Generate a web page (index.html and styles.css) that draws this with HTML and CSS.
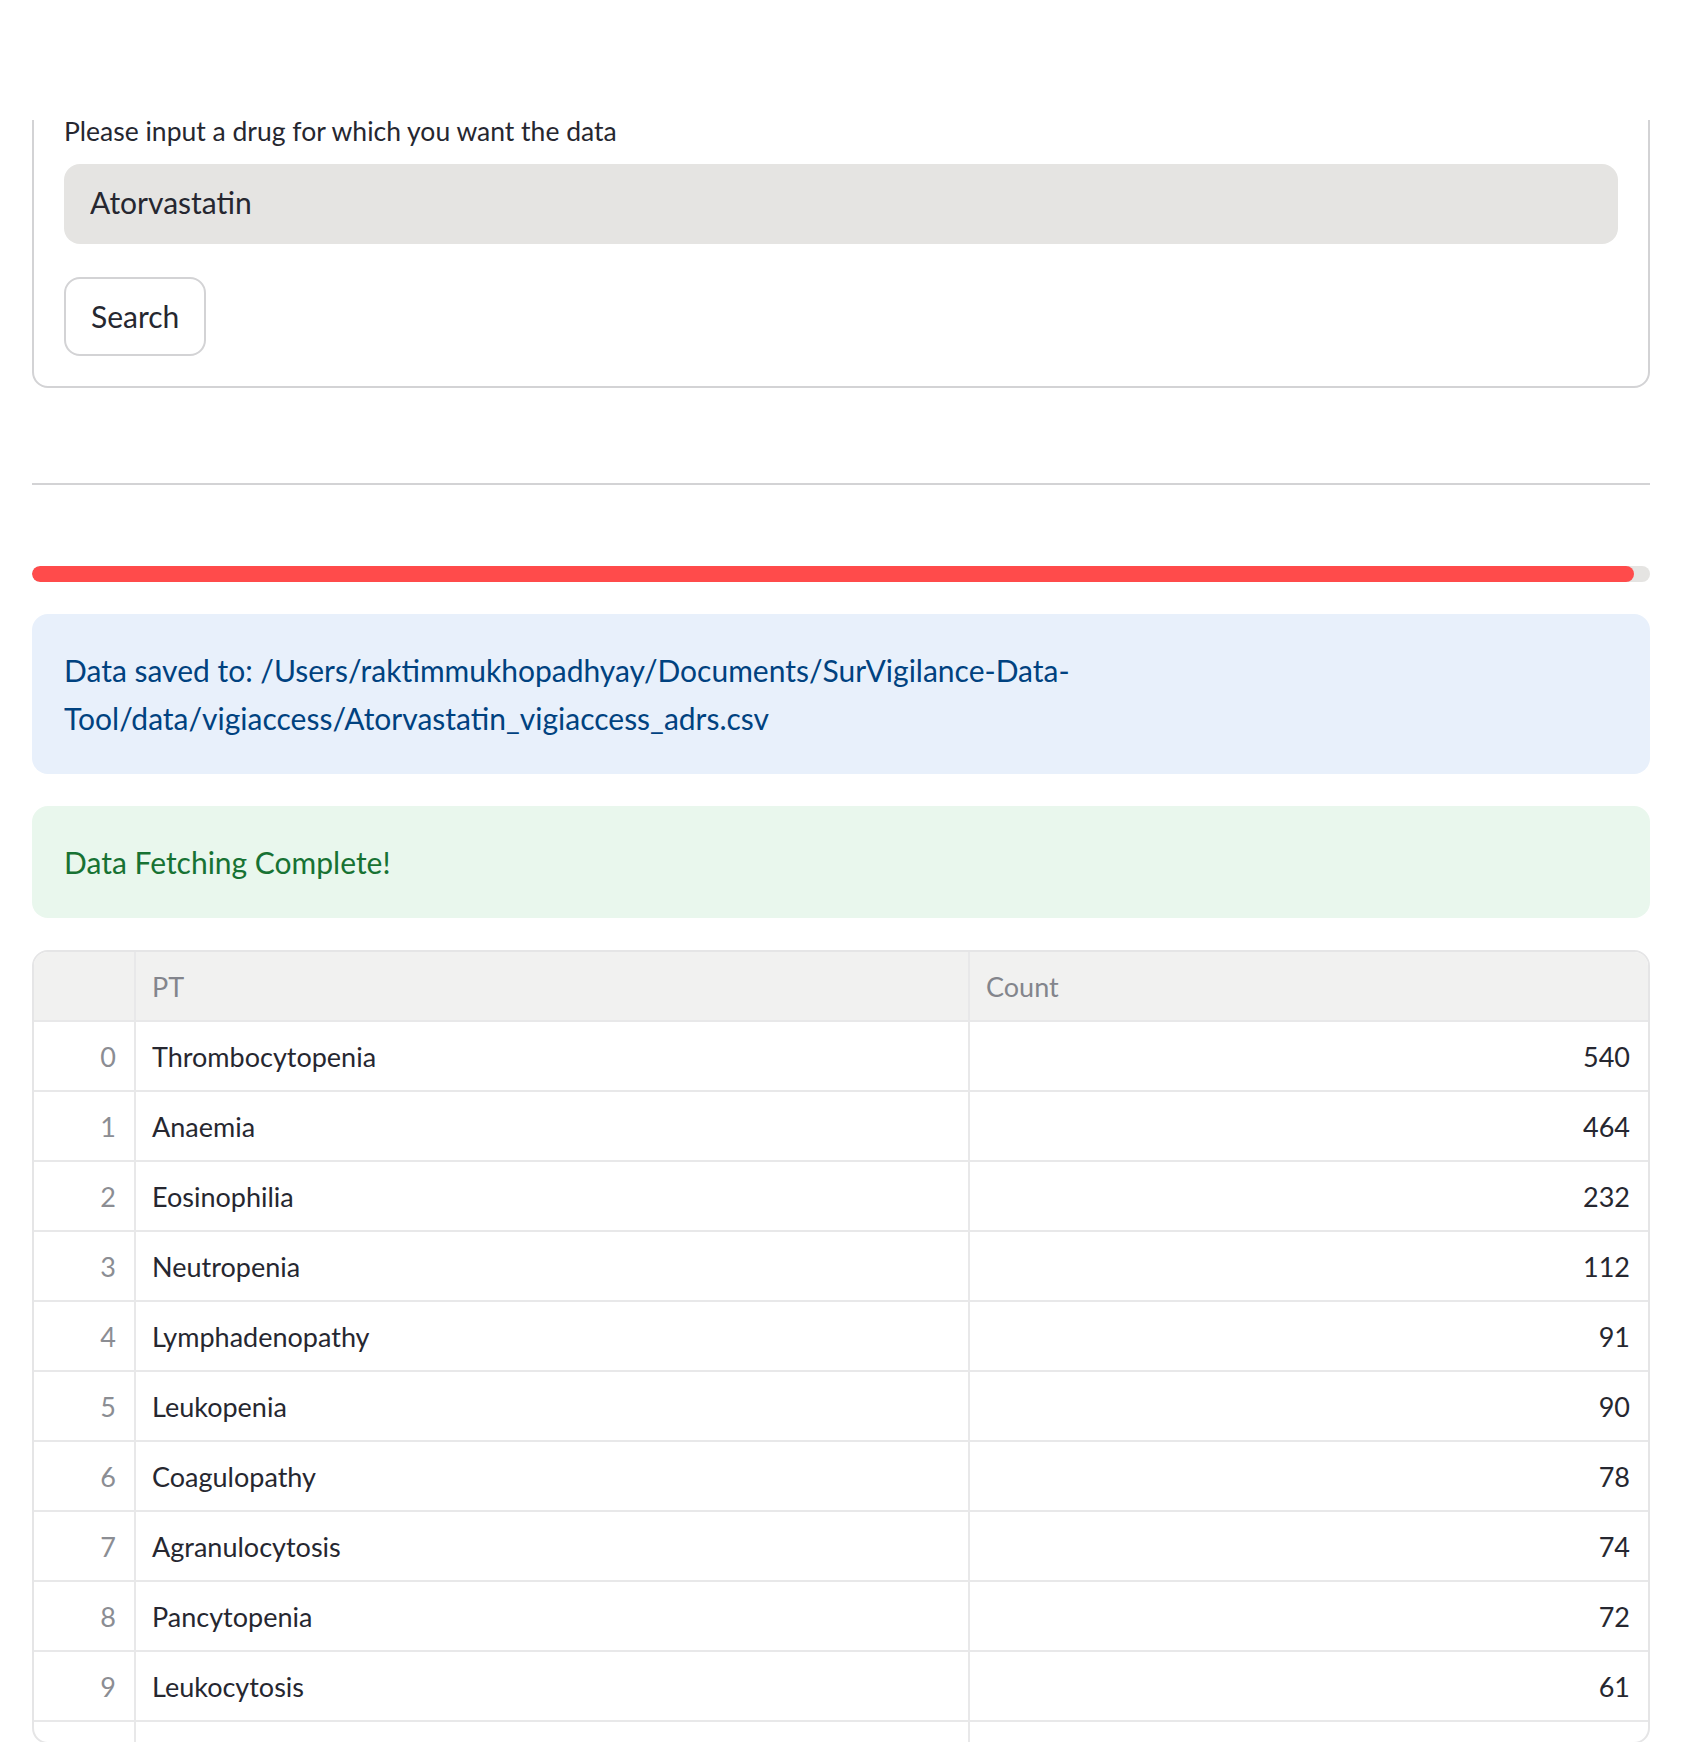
FILE: index.html
```html
<!DOCTYPE html>
<html lang="en">
<head>
<meta charset="utf-8">
<title>SurVigilance Data Tool – VigiAccess</title>
<link rel="stylesheet" href="styles.css">
</head>
<body>
<header class="app-header"></header>
<main class="main">
  <form class="query-form">
    <label class="field-label" for="drug">Please input a drug for which you want the data</label>
    <input id="drug" class="text-input" type="text" value="Atorvastatin">
    <button type="button" class="btn">Search</button>
  </form>

  <hr class="divider">

  <div class="progress"><div class="progress-fill" style="width:99%"></div></div>

  <div class="alert alert-info">Data saved to: /Users/raktimmukhopadhyay/Documents/SurVigilance-Data-<br>Tool/data/vigiaccess/Atorvastatin_vigiaccess_adrs.csv</div>

  <div class="alert alert-success">Data Fetching Complete!</div>

  <div class="grid">
    <div class="row head">
      <div class="cell idx"></div>
      <div class="cell">PT</div>
      <div class="cell last">Count</div>
    </div>
    <div class="row"><div class="cell idx">0</div><div class="cell">Thrombocytopenia</div><div class="cell num last">540</div></div>
    <div class="row"><div class="cell idx">1</div><div class="cell">Anaemia</div><div class="cell num last">464</div></div>
    <div class="row"><div class="cell idx">2</div><div class="cell">Eosinophilia</div><div class="cell num last">232</div></div>
    <div class="row"><div class="cell idx">3</div><div class="cell">Neutropenia</div><div class="cell num last">112</div></div>
    <div class="row"><div class="cell idx">4</div><div class="cell">Lymphadenopathy</div><div class="cell num last">91</div></div>
    <div class="row"><div class="cell idx">5</div><div class="cell">Leukopenia</div><div class="cell num last">90</div></div>
    <div class="row"><div class="cell idx">6</div><div class="cell">Coagulopathy</div><div class="cell num last">78</div></div>
    <div class="row"><div class="cell idx">7</div><div class="cell">Agranulocytosis</div><div class="cell num last">74</div></div>
    <div class="row"><div class="cell idx">8</div><div class="cell">Pancytopenia</div><div class="cell num last">72</div></div>
    <div class="row"><div class="cell idx">9</div><div class="cell">Leukocytosis</div><div class="cell num last">61</div></div>
    <div class="row"><div class="cell idx"></div><div class="cell"></div><div class="cell num last"></div></div>
  </div>
</main>
</body>
</html>
```

FILE: styles.css
```css
html, body {
  margin: 0;
  padding: 0;
  overflow: hidden;
  background: #ffffff;
}

body {
  font-family: Lato, "Liberation Sans", sans-serif;
  color: #31333f;
}

.app-header {
  position: fixed;
  top: 0;
  left: 0;
  right: 0;
  height: 120px;
  background: #ffffff;
  z-index: 10;
}

.main {
  padding: 71px 32px 0;
  display: flex;
  flex-direction: column;
}

/* ---------- form ---------- */
.query-form {
  display: flex;
  flex-direction: column;
  align-items: flex-start;
  border: 2px solid #d3d3d5;
  border-radius: 16px;
  padding: 34px 30px 30px;
  margin: 0;
}

.field-label {
  display: block;
  height: 48px;
  line-height: 48px;
  font-size: 26.5px;
  color: #262730;
  margin-bottom: 9px;
}

.text-input {
  box-sizing: border-box;
  width: 100%;
  height: 80px;
  border: none;
  outline: none;
  border-radius: 16px;
  background: #e5e4e2;
  padding: 0 26px 4px;
  font-family: Lato, "Liberation Sans", sans-serif;
  font-size: 30px;
  color: #262730;
}

.btn {
  box-sizing: border-box;
  margin-top: 33px;
  height: 79px;
  padding: 0 25px 2px;
  background: #ffffff;
  border: 2px solid #d3d3d5;
  border-radius: 16px;
  font-family: Lato, "Liberation Sans", sans-serif;
  font-size: 30px;
  color: #262730;
}

/* ---------- divider ---------- */
.divider {
  border: none;
  height: 2px;
  background: #d3d3d5;
  margin: 95px 0 81px;
}

/* ---------- progress ---------- */
.progress {
  height: 16px;
  border-radius: 8px;
  background: #e5e4e2;
  overflow: hidden;
  margin-bottom: 32px;
}

.progress-fill {
  height: 100%;
  background: #ff4b4b;
  border-radius: 8px;
}

/* ---------- alerts ---------- */
.alert {
  border-radius: 16px;
  padding: 32px 32px;
  font-size: 30px;
  line-height: 48px;
  margin-bottom: 32px;
}

.alert-info {
  background: #e8f0fb;
  color: #004280;
}

.alert-success {
  background: #e9f7ed;
  color: #177233;
}

/* ---------- data grid ---------- */
.grid {
  box-sizing: border-box;
  height: 794px;
  border: 2px solid #e5e5e6;
  border-radius: 16px;
  overflow: hidden;
}

.row {
  box-sizing: border-box;
  display: grid;
  grid-template-columns: 102px 834px 1fr;
  height: 70px;
  border-bottom: 2px solid #e8e8e9;
  color: #262730;
}

.row.head {
  background: #f1f1f0;
  color: #83858c;
}

.cell {
  box-sizing: border-box;
  display: flex;
  align-items: center;
  padding: 0 16px;
  border-right: 2px solid #e8e8e9;
  font-size: 27px;
  white-space: nowrap;
}

.cell.last {
  border-right: none;
}

.cell.idx {
  justify-content: flex-end;
  padding-right: 18px;
  color: #8b8d93;
}

.cell.num {
  justify-content: flex-end;
  padding-right: 18px;
}
```
